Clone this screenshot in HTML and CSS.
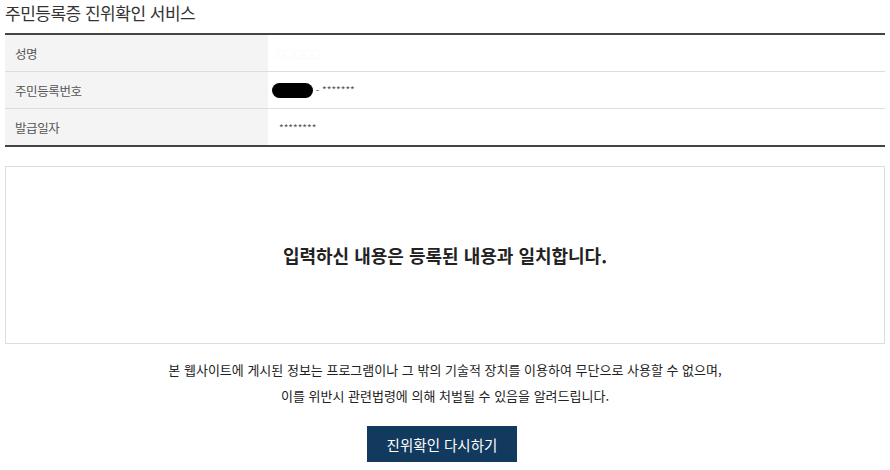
FILE: index.html
```html
<!DOCTYPE html>
<html lang="ko">
<head>
  <meta charset="UTF-8" />
  <meta name="viewport" content="width=device-width, initial-scale=1.0" />
  <title>주민등록증 진위확인 서비스</title>
  <link rel="stylesheet" href="styles.css">
</head>
<body>
  <div class="wrap">
    <h1 class="page-title">주민등록증 진위확인 서비스</h1>

    <table class="info-table">
      <tr>
        <th>성명</th>
        <td><span class="blurred">○○○○○</span></td>
      </tr>
      <tr>
        <th>주민등록번호</th>
        <td><span class="redact"></span> - <span class="stars">*******</span></td>
      </tr>
      <tr>
        <th>발급일자</th>
        <td><span class="stars date">********</span></td>
      </tr>
    </table>

    <!-- 결과 박스 -->
    <div class="result-box">
      <p>입력하신 내용은 등록된 내용과 일치합니다.</p>
    </div>

    <div class="notice">
      <p>본 웹사이트에 게시된 정보는 프로그램이나 그 밖의 기술적 장치를 이용하여 무단으로 사용할 수 없으며,</p>
      <p>이를 위반시 관련법령에 의해 처벌될 수 있음을 알려드립니다.</p>
    </div>

    <div class="btn-area">
      <button class="btn-retry">진위확인 다시하기</button>
    </div>
  </div>
</body>
</html>
```

FILE: styles.css
```css
body {
  margin: 0;
  background: #fff;
  color: #333;
  font-family: "Noto Sans CJK KR", "Noto Sans", sans-serif;
}

.wrap {
  padding: 0 5px;
}

.page-title {
  margin: 0;
  height: 33px;
  font-size: 17px;
  font-weight: 400;
  line-height: 26px;
  color: #333;
  letter-spacing: -0.5px;
}

.info-table {
  width: 100%;
  border-collapse: collapse;
  border-top: 2px solid #444;
  border-bottom: 2px solid #444;
}

.info-table th,
.info-table td {
  height: 36px;
  padding: 0;
  border-bottom: 1px solid #ddd;
  font-size: 12.5px;
  font-weight: 400;
  text-align: left;
  vertical-align: middle;
}

.info-table th {
  width: 253px;
  padding-left: 10px;
  background: #f4f4f4;
  color: #555;
  letter-spacing: -0.4px;
}

.info-table td {
  padding-left: 4px;
  color: #555;
  font-size: 10px;
}

.redact {
  display: inline-block;
  width: 41px;
  height: 15px;
  border-radius: 8px;
  background: #000;
  vertical-align: middle;
}

.stars {
  font-size: 10px;
}

.stars.date {
  margin-left: 7px;
}

.blurred {
  margin-left: 4px;
  font-size: 9px;
  color: #f6f6f6;
}

.result-box {
  margin-top: 19px;
  height: 176px;
  border: 1px solid #ddd;
  display: flex;
  align-items: center;
  justify-content: center;
}

.result-box p {
  margin: 0;
  font-size: 18px;
  font-weight: 700;
  color: #222;
}

.notice {
  margin-top: 13px;
  text-align: center;
  font-size: 13px;
  line-height: 26px;
  color: #222;
}

.notice p {
  margin: 0;
}

.btn-area {
  margin-top: 17px;
  padding-right: 6px;
  text-align: center;
}

.btn-retry {
  width: 150px;
  height: 36px;
  border: none;
  background: #123a5e;
  color: #fff;
  font-family: inherit;
  font-size: 14.5px;
  cursor: pointer;
}
```
